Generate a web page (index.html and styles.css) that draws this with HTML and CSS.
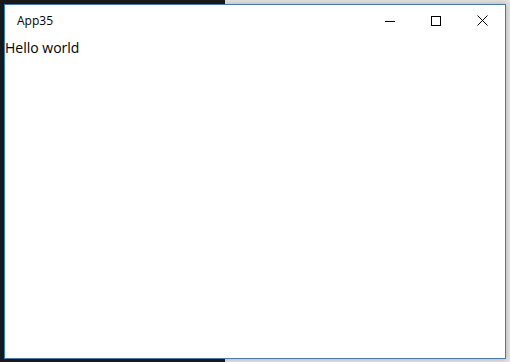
FILE: index.html
```html
<html lang="en">
    <head>
        <title>App35</title>

        <link rel="stylesheet" href="styles.css">
    </head>

    <body>
        <div class="window">
            <div class="titlebar">
                <span class="title">App35</span>

                <div class="controls">
                    <div class="control">
                        <svg width="10" height="10" viewBox="0 0 10 10">
                            <path d="M0 5.5H10" stroke="#000" stroke-width="1"/>
                        </svg>
                    </div>
                    <div class="control">
                        <svg width="10" height="10" viewBox="0 0 10 10">
                            <rect x="0.5" y="0.5" width="9" height="9" fill="none" stroke="#000" stroke-width="1"/>
                        </svg>
                    </div>
                    <div class="control">
                        <svg width="11" height="11" viewBox="0 0 11 11">
                            <path d="M0.5 0.5L10.5 10.5M10.5 0.5L0.5 10.5" stroke="#000" stroke-width="1"/>
                        </svg>
                    </div>
                </div>
            </div>

            <div class="content">
                <p>Hello world</p>
            </div>
        </div>
    </body>
</html>
```

FILE: styles.css
```css
body {
    margin: 0;
    padding: 4px 4px 3px 4px;
    height: 362px;
    box-sizing: border-box;

    font-family: "Open Sans", "Noto Sans", sans-serif;
    background: linear-gradient(to right, #1b1b1b 0, #1b1b1b 225px, #e4e4e4 225px, #e4e4e4 100%);
}

.window {
    display: flex;
    flex-direction: column;

    width: 502px;
    height: 355px;
    box-sizing: border-box;
    border: 1px solid #2185d9;
    background-color: #fff;
    box-shadow: 0 0 6px rgba(0, 0, 0, .25);
}

.titlebar {
    display: flex;
    align-items: center;
    height: 31px;
}

.title {
    padding-left: 12px;
    font-size: 12px;
    color: #000;
}

.controls {
    display: flex;
    margin-left: auto;
    height: 100%;
}

.control {
    display: flex;
    align-items: center;
    justify-content: center;
    width: 46px;
    height: 100%;
}

.control svg {
    display: block;
}

.content {
    padding-top: 2px;
}

.content p {
    margin: 0;
    font-size: 14px;
    color: #000;
}
```
